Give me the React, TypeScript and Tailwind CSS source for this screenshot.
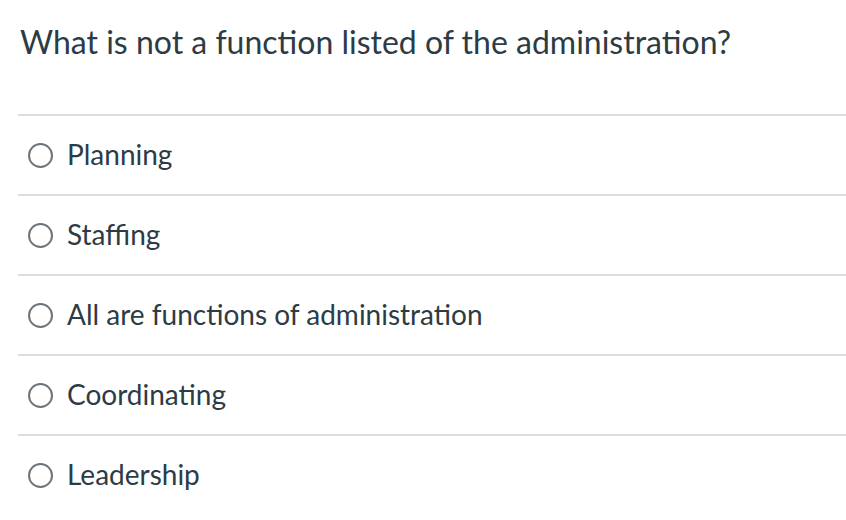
const options = ['Planning', 'Staffing', 'All are functions of administration', 'Coordinating', 'Leadership'];

export default function App() {
  return (
    <div className="w-[846px] h-[520px] bg-white text-[#2d3b45]" style={{ fontFamily: 'Lato, "Noto Sans", sans-serif' }}>
      <div className="pl-[20px] pt-[20px] h-[114px]">
        <h1 className="text-[32px] leading-[44px] font-normal">What is not a function listed of the administration?</h1>
      </div>
      <div className="ml-[18px]">
        {options.map((o) => (
          <label key={o} className="flex items-center h-[80px] border-t-2 border-[#dddddd] gap-[14px] pl-[10px]">
            <span className="w-[25px] h-[25px] rounded-full border-2 border-[#6d747a] bg-white shrink-0" />
            <span className="text-[28px] leading-none -mt-[3px]">{o}</span>
          </label>
        ))}
      </div>
    </div>
  );
}
